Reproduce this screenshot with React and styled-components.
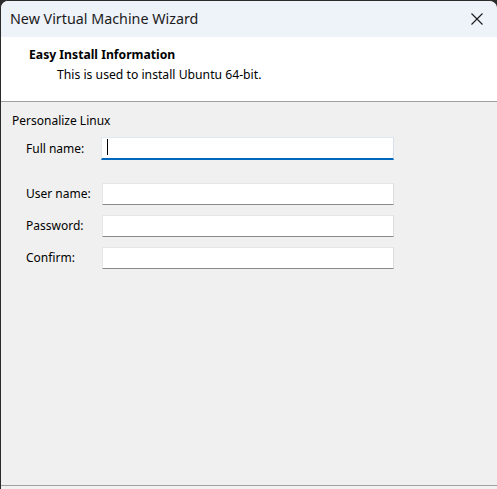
import React from "react";
import styled, { createGlobalStyle } from "styled-components";

const Global = createGlobalStyle`
  html, body { margin: 0; padding: 0; background: #2b2b2b; }
  body { font-family: "Noto Sans", "Open Sans", sans-serif; }
  * { box-sizing: border-box; }
`;

const Window = styled.div`
  width: 497px;
  height: 489px;
  border-left: 1px solid #2b2b2b;
  border-top: 1px solid #2b2b2b;
  border-radius: 8px 8px 0 0;
  overflow: hidden;
  display: flex;
  flex-direction: column;
  background: #f0f0f0;
  color: #000;
`;

const TitleBar = styled.div`
  height: 36px;
  flex: none;
  display: flex;
  align-items: center;
  justify-content: space-between;
  padding: 0 14px 0 9px;
  background: #eef2f9;
`;

const TitleText = styled.span`
  font-size: 14.3px;
  color: #1b1b1b;
  padding-bottom: 1px;
`;

const CloseButton = styled.button`
  border: 0;
  background: transparent;
  padding: 0;
  width: 12px;
  height: 12px;
  display: flex;
  margin-top: -1px;
`;

const Header = styled.div`
  height: 65px;
  flex: none;
  background: #fff;
  border-bottom: 1px solid #a0a0a0;
  padding: 9px 0 0 28px;
  font-size: 12.2px;
`;

const HeaderTitle = styled.div`
  font-weight: 700;
  line-height: 18px;
`;

const HeaderSub = styled.div`
  padding-left: 28px;
  line-height: 19px;
  margin-top: 1px;
`;

const Body = styled.div`
  flex: 1;
  padding: 11px 0 0 11px;
  font-size: 12px;
`;

const GroupTitle = styled.div`
  line-height: 16px;
`;

const Form = styled.div`
  display: grid;
  grid-template-columns: 76px 292px;
  row-gap: 10px;
  margin: 8px 0 0 14px;
  align-items: center;
`;

const Label = styled.label`
  line-height: 16px;
  margin-bottom: ${(p) => (p.$first ? "13px" : "0")};
`;

const Field = styled.div`
  position: relative;
  height: ${(p) => (p.$focused ? "23px" : "22px")};
  background: #fff;
  border: 1px solid ${(p) => (p.$focused ? "#e3e8f0" : "#e6e6e6")};
  border-right-color: ${(p) => (p.$focused ? "#d6e0ee" : "#dcdcdc")};
  border-bottom: ${(p) => (p.$focused ? "2px solid #0067c0" : "1px solid #8a8a8a")};
  margin-left: ${(p) => (p.$focused ? "-1px" : "0")};
  margin-bottom: ${(p) => (p.$focused ? "13px" : "0")};
`;

const Caret = styled.span`
  position: absolute;
  left: 5px;
  top: 1px;
  width: 1px;
  height: 16px;
  background: #000;
`;

const Footer = styled.div`
  height: 4px;
  flex: none;
  border-top: 1px solid #a0a0a0;
  background: #f2f2f2;
`;

const rows = [
  { label: "Full name:", focused: true },
  { label: "User name:" },
  { label: "Password:" },
  { label: "Confirm:" },
];

export default function App() {
  return (
    <>
      <Global />
      <Window>
        <TitleBar>
          <TitleText>New Virtual Machine Wizard</TitleText>
          <CloseButton aria-label="Close">
            <svg width="12" height="12" viewBox="0 0 12 12">
              <path d="M0.5 0.5L11.5 11.5M11.5 0.5L0.5 11.5" stroke="#1a1a1a" strokeWidth="1.1" fill="none" />
            </svg>
          </CloseButton>
        </TitleBar>
        <Header>
          <HeaderTitle>Easy Install Information</HeaderTitle>
          <HeaderSub>This is used to install Ubuntu 64-bit.</HeaderSub>
        </Header>
        <Body>
          <GroupTitle>Personalize Linux</GroupTitle>
          <Form>
            {rows.map((r) => (
              <React.Fragment key={r.label}>
                <Label $first={r.focused}>{r.label}</Label>
                <Field $focused={r.focused}>{r.focused && <Caret />}</Field>
              </React.Fragment>
            ))}
          </Form>
        </Body>
        <Footer />
      </Window>
    </>
  );
}
